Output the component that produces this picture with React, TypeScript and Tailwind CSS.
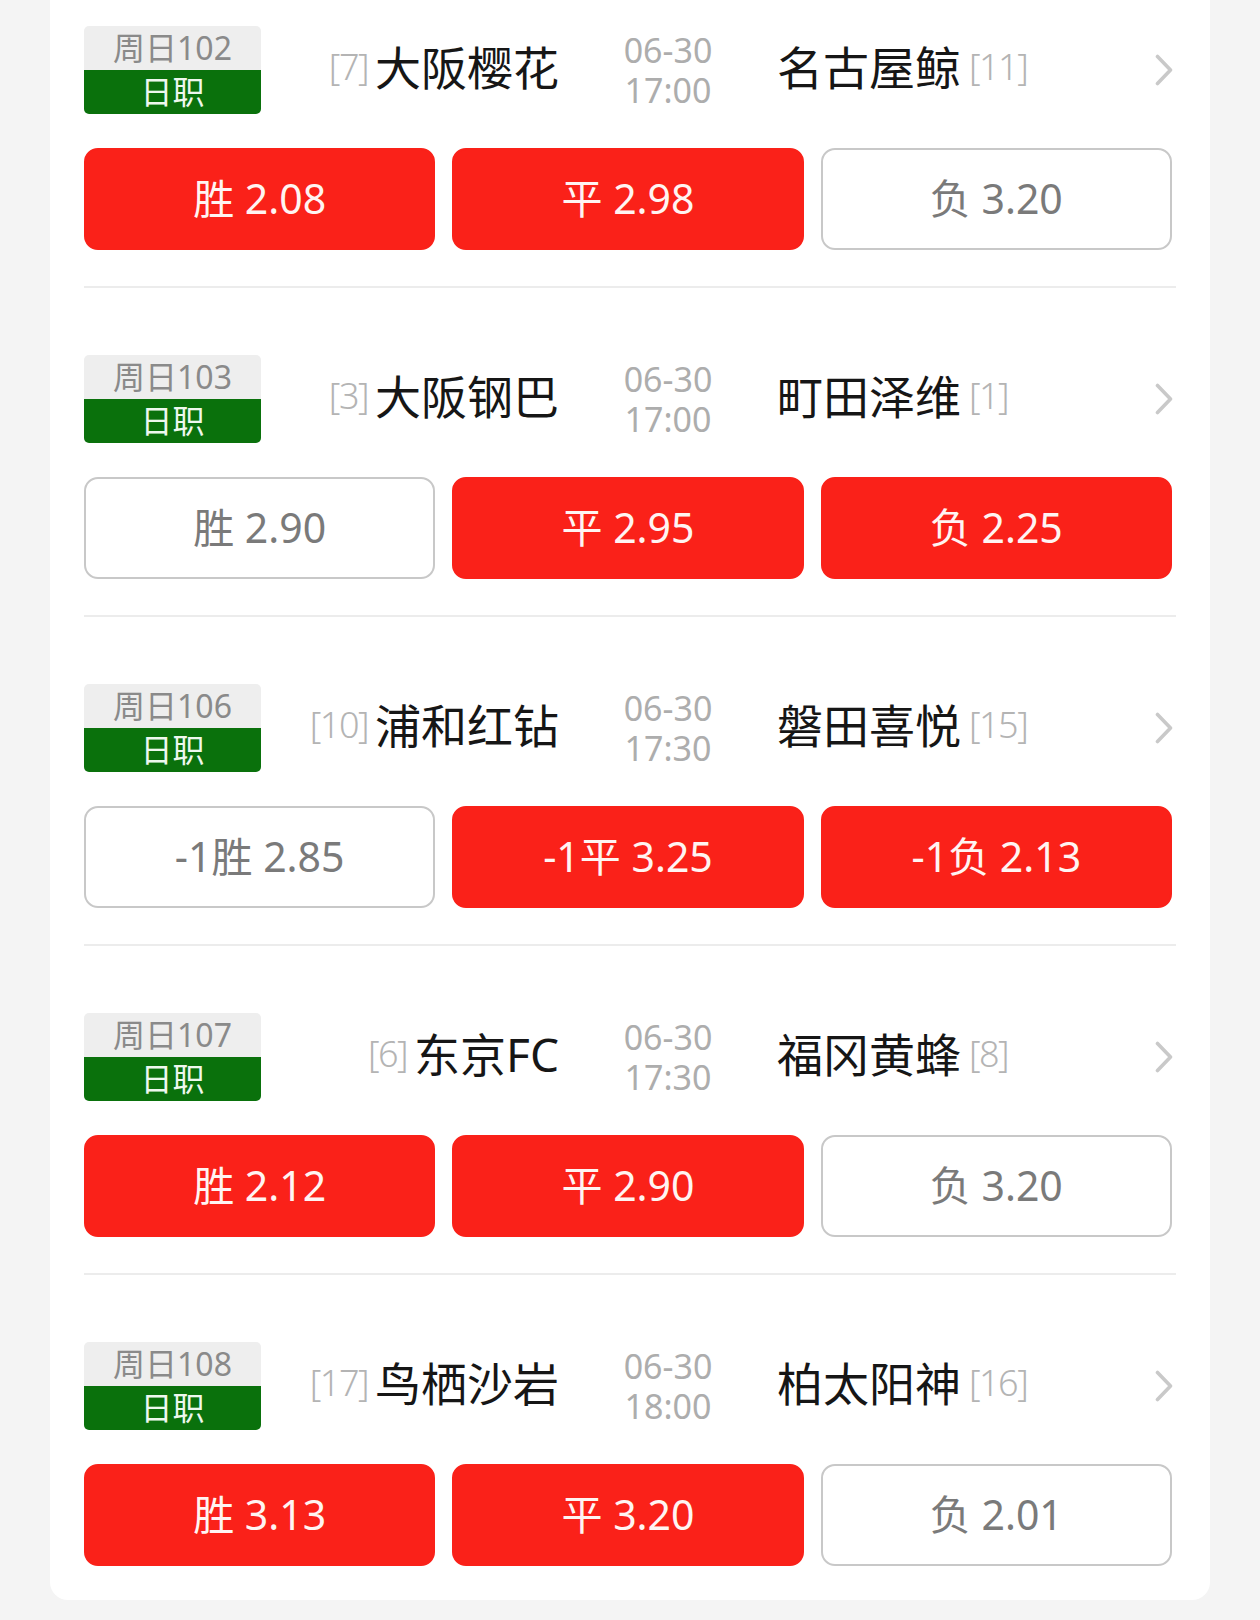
import React from "react";

type Odd = { label: string; red: boolean };
type Match = {
  code: string;
  homeRank: string;
  home: string;
  date: string;
  time: string;
  away: string;
  awayRank: string;
  odds: Odd[];
};

const matches: Match[] = [
  {
    code: "周日102",
    homeRank: "[7]",
    home: "大阪樱花",
    date: "06-30",
    time: "17:00",
    away: "名古屋鲸",
    awayRank: "[11]",
    odds: [
      { label: "胜 2.08", red: true },
      { label: "平 2.98", red: true },
      { label: "负 3.20", red: false },
    ],
  },
  {
    code: "周日103",
    homeRank: "[3]",
    home: "大阪钢巴",
    date: "06-30",
    time: "17:00",
    away: "町田泽维",
    awayRank: "[1]",
    odds: [
      { label: "胜 2.90", red: false },
      { label: "平 2.95", red: true },
      { label: "负 2.25", red: true },
    ],
  },
  {
    code: "周日106",
    homeRank: "[10]",
    home: "浦和红钻",
    date: "06-30",
    time: "17:30",
    away: "磐田喜悦",
    awayRank: "[15]",
    odds: [
      { label: "-1胜 2.85", red: false },
      { label: "-1平 3.25", red: true },
      { label: "-1负 2.13", red: true },
    ],
  },
  {
    code: "周日107",
    homeRank: "[6]",
    home: "东京FC",
    date: "06-30",
    time: "17:30",
    away: "福冈黄蜂",
    awayRank: "[8]",
    odds: [
      { label: "胜 2.12", red: true },
      { label: "平 2.90", red: true },
      { label: "负 3.20", red: false },
    ],
  },
  {
    code: "周日108",
    homeRank: "[17]",
    home: "鸟栖沙岩",
    date: "06-30",
    time: "18:00",
    away: "柏太阳神",
    awayRank: "[16]",
    odds: [
      { label: "胜 3.13", red: true },
      { label: "平 3.20", red: true },
      { label: "负 2.01", red: false },
    ],
  },
];

function Chevron() {
  return (
    <svg width="18" height="32" viewBox="0 0 18 32" fill="none">
      <polyline
        points="2.5,2.5 15.5,16 2.5,29.5"
        stroke="#c9c9c9"
        strokeWidth="3.6"
        strokeLinecap="round"
        strokeLinejoin="round"
      />
    </svg>
  );
}

function MatchRow({ m, first, last }: { m: Match; first: boolean; last: boolean }) {
  return (
    <div className={first ? "pt-[26px]" : "pt-[67px]"}>
      <div className="flex items-center h-[88px]">
        <div className="w-[177px] h-[88px] rounded-[5px] overflow-hidden flex flex-col shrink-0">
          <div className="h-[44px] bg-[#eeeeee] text-[#8a8a8a] text-[32px] leading-[44px] text-center">
            {m.code}
          </div>
          <div className="h-[44px] bg-[#0a710c] text-[#eef8ee] text-[32px] leading-[44px] text-center">
            日职
          </div>
        </div>
        <div className="w-[298px] flex items-center justify-end gap-[7px] -mt-[6px]">
          <span className="text-[36px] leading-[48px] font-light text-[#b4b4b4] tracking-[-1.5px]">
            {m.homeRank}
          </span>
          <span className="text-[46px] leading-[62px] text-[#161616]">{m.home}</span>
        </div>
        <div className="w-[218px] flex flex-col items-center text-[34px] leading-[40px] text-[#adadad]">
          <span>{m.date}</span>
          <span>{m.time}</span>
        </div>
        <div className="flex-1 flex items-center gap-[8px] -mt-[6px]">
          <span className="text-[46px] leading-[62px] text-[#161616]">{m.away}</span>
          <span className="text-[36px] leading-[48px] font-light text-[#b4b4b4] tracking-[-1.5px]">
            {m.awayRank}
          </span>
        </div>
        <div className="w-[18px] mr-[3px] flex items-center">
          <Chevron />
        </div>
      </div>
      <div className="mt-[34px] w-[1088px] grid grid-cols-3 gap-[17px]">
        {m.odds.map((o, i) =>
          o.red ? (
            <div
              key={i}
              className="h-[102px] rounded-[14px] bg-[#fa2119] border-2 border-[#fa2119] flex items-center justify-center text-[41px] text-[#fff4f2]"
            >
              {o.label}
            </div>
          ) : (
            <div
              key={i}
              className="h-[102px] rounded-[14px] bg-white border-2 border-[#c8c8c8] flex items-center justify-center text-[41px] text-[#7a7a7a]"
            >
              {o.label}
            </div>
          )
        )}
      </div>
      {!last && <div className="mt-[36px] h-[2px] bg-[#ececec]" />}
    </div>
  );
}

export default function App() {
  return (
    <div
      className="min-h-[1620px] w-[1260px] bg-[#f4f4f4] px-[50px]"
      style={{ fontFamily: '"Noto Sans", "Noto Sans CJK SC", sans-serif' }}
    >
      <div className="bg-white rounded-b-[18px] pl-[34px] pr-[34px] pb-[34px]">
        {matches.map((m, i) => (
          <MatchRow key={i} m={m} first={i === 0} last={i === matches.length - 1} />
        ))}
      </div>
    </div>
  );
}
